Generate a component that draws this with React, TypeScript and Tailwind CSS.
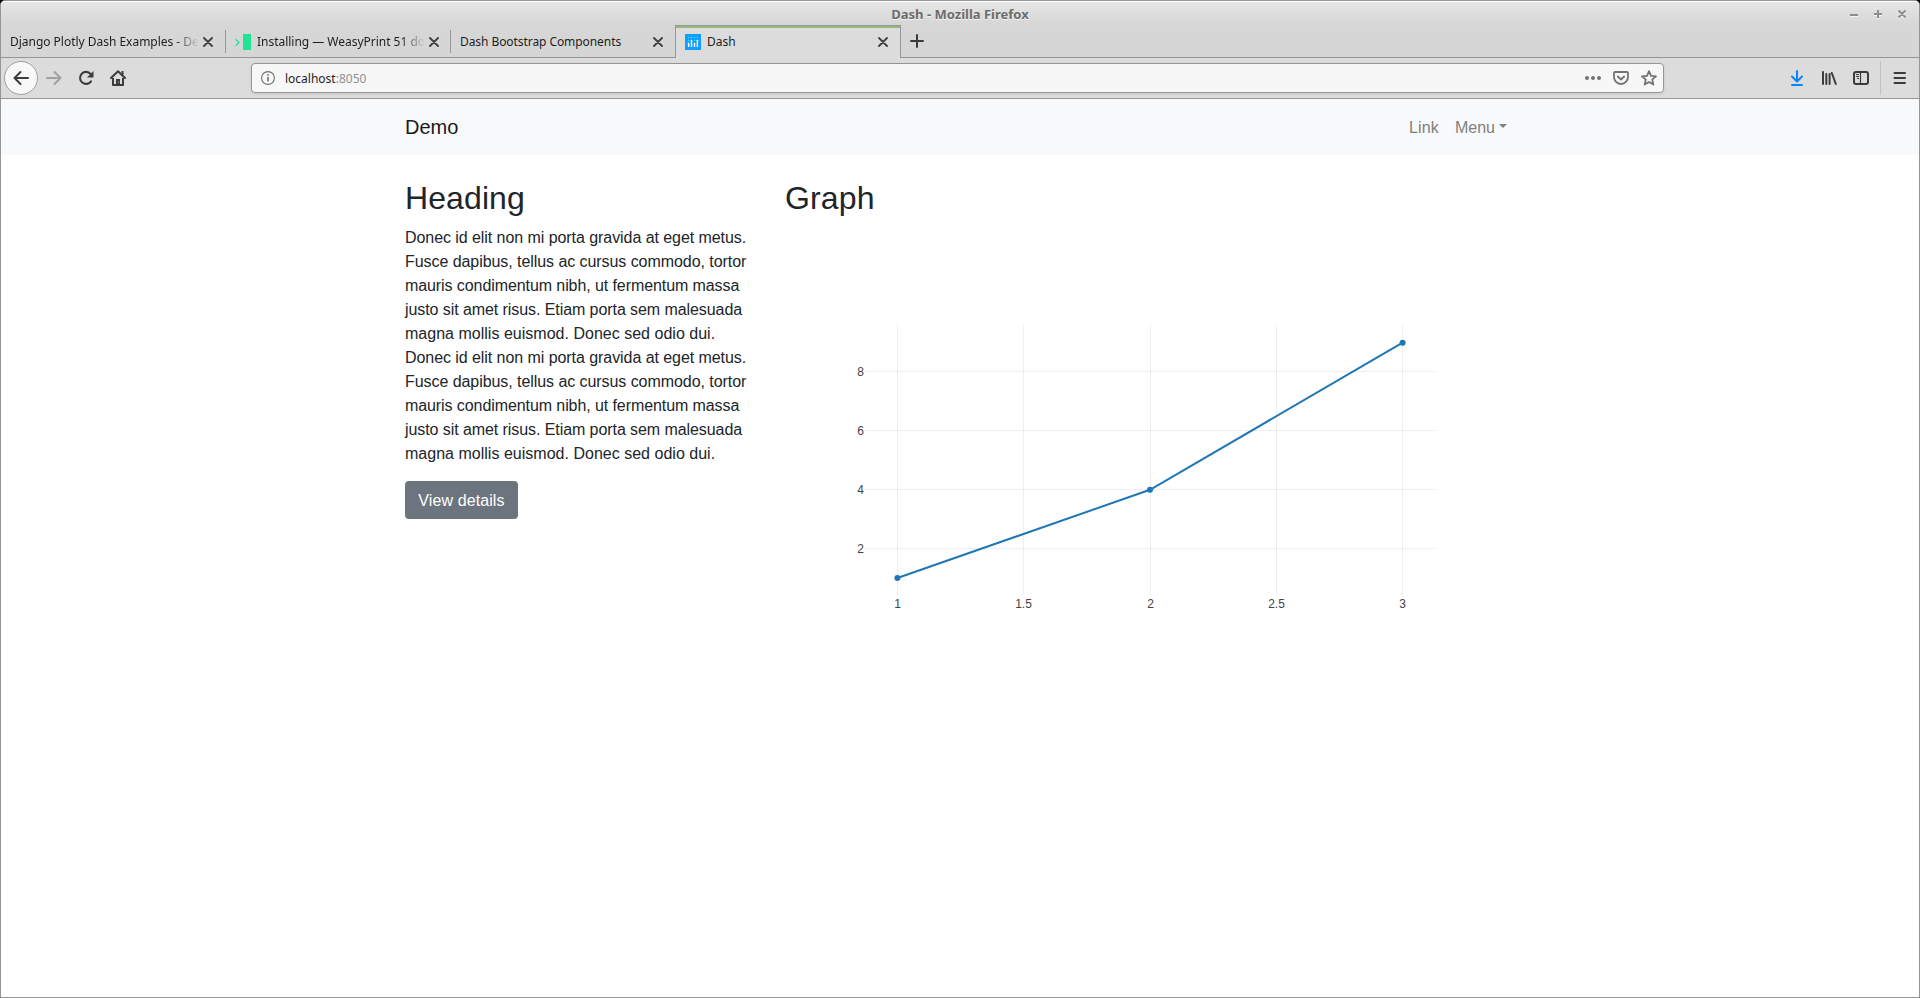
import React from "react";

type TabProps = {
  title: string;
  icon?: React.ReactNode;
  active?: boolean;
  fade?: string;
  separator?: boolean;
};

function CloseIcon() {
  return (
    <svg width="10" height="10" viewBox="0 0 10 10" className="shrink-0" fill="none" stroke="#3f3f3f" strokeWidth="1.8" strokeLinecap="round">
      <path d="M1 1l8 8M9 1l-8 8" />
    </svg>
  );
}

function Tab({ title, icon, active, fade = "", separator }: TabProps) {
  if (active) {
    return (
      <div className="flex h-[33px] w-[226px] shrink-0 flex-col border-x border-t border-[#969696] bg-[#dcdcdc]">
        <div className="h-[2px] shrink-0 bg-[#9ab87c]" />
        <div className="flex flex-1 items-center pr-[12px] pb-[2px] pl-[9px]">
          {icon}
          <span className="ml-[6px] flex-1 leading-[18px] whitespace-nowrap">{title}</span>
          <CloseIcon />
        </div>
      </div>
    );
  }
  return (
    <div className="flex h-[33px] w-[225px] shrink-0 border-b border-[#969696] pt-[5px]">
      <div className={`flex h-[23px] w-full items-center pl-[9px] ${separator ? "border-r border-[#969696] pr-[12px]" : "pr-[13px]"}`}>
        {icon && <span className="mr-[6px] flex">{icon}</span>}
        <span className={`mr-[4px] flex-1 leading-[18px] whitespace-nowrap ${fade}`}>{title}</span>
        <CloseIcon />
      </div>
    </div>
  );
}

function DocsIcon() {
  return (
    <svg width="16" height="16" viewBox="0 0 16 16">
      <path d="M0.8 5.2L4 8.5L0.8 11.8" fill="none" stroke="#1ee494" strokeWidth="1.3" />
      <rect x="8" width="8" height="16" fill="#1ee494" />
    </svg>
  );
}

function DashIcon() {
  return (
    <svg width="16" height="16" viewBox="0 0 16 16" className="shrink-0">
      <rect width="16" height="16" fill="#119dff" />
      <g fill="#25e6f5">
        <circle cx="3.600" cy="3.500" r="0.800" />
        <circle cx="6.500" cy="3.500" r="0.800" />
        <circle cx="9.500" cy="3.500" r="0.800" />
        <circle cx="12.400" cy="3.500" r="0.800" />
        <circle cx="3.600" cy="6.500" r="0.800" />
        <circle cx="9.500" cy="6.500" r="0.800" />
      </g>
      <g fill="#fff">
        <rect x="2.900" y="8.800" width="1.400" height="4.200" rx="0.500" />
        <rect x="5.800" y="5.800" width="1.400" height="7.200" rx="0.500" />
        <rect x="8.800" y="8.800" width="1.400" height="4.200" rx="0.500" />
        <rect x="11.700" y="5.800" width="1.400" height="7.200" rx="0.500" />
      </g>
    </svg>
  );
}

function TitleBar() {
  return (
    <div className="flex h-[24px] shrink-0 items-start border-t border-white bg-linear-to-b from-[#e6e6e6] to-[#d6d6d6]">
      <div className="w-[119px]" />
      <div className="flex-1 pt-[3px] text-center text-[13px] leading-[18px] font-bold text-[#6c6c6c] [text-shadow:0_1px_0_#f4f4f4]">Dash - Mozilla Firefox</div>
      <svg width="119" height="22" viewBox="0 0 119 22" fill="none">
        <g stroke="#fff" strokeWidth="2" transform="translate(0 1)" opacity="0.7">
          <path d="M50 13h8M74 12h8M78 8v8M98.500 8.500l7 7M105.500 8.500l-7 7" />
        </g>
        <g stroke="#8e8e8e" strokeWidth="2">
          <path d="M50 13h8M74 12h8M78 8v8M98.500 8.500l7 7M105.500 8.500l-7 7" />
        </g>
      </svg>
    </div>
  );
}

function Toolbar() {
  return (
    <div className="flex h-[41px] shrink-0 items-center border-b border-[#969696] bg-[#dcdcdc] pl-[3px]">
      <div className="flex h-[34px] w-[34px] items-center justify-center rounded-full border border-[#a0a0a0] bg-[#f8f8f8]">
        <svg width="16" height="16" viewBox="0 0 16 16" fill="none" stroke="#3c3c3c" strokeWidth="2" strokeLinecap="round" strokeLinejoin="round"><path d="M15 8H1.500M7.500 2L1.500 8l6 6" /></svg>
      </div>
      <svg className="ml-[8px]" width="16" height="16" viewBox="0 0 16 16" fill="none" stroke="#a0a0a0" strokeWidth="2" strokeLinecap="round" strokeLinejoin="round"><path d="M1 8h13.500M8.500 2l6 6l-6 6" /></svg>
      <svg className="ml-[16px]" width="16" height="16" viewBox="0 0 16 16" fill="none" stroke="#3c3c3c" strokeWidth="2.1" strokeLinecap="round"><path d="M13 11.300A6 6 0 1 1 12.600 4" /><path d="M15.500 1v6.500h-6.500z" fill="#3c3c3c" stroke="none" /></svg>
      <svg className="ml-[16px]" width="16" height="16" viewBox="0 0 16 16"><path d="M1 8L8 1.200L15 8" fill="none" stroke="#3c3c3c" strokeWidth="2" strokeLinecap="round" strokeLinejoin="round" /><path d="M3 8v7h10V8" fill="none" stroke="#3c3c3c" strokeWidth="2" strokeLinejoin="round" /><path d="M6 15V9h4v6z" fill="#3c3c3c" /><path d="M12.500 1v4" stroke="#3c3c3c" strokeWidth="2" /><circle cx="8.600" cy="12" r="0.600" fill="#dcdcdc" /></svg>
      <div className="ml-[125px] flex h-[30px] w-[1413px] items-center rounded-[4px] border border-[#969696] bg-[#f7f7f7] pl-[9px] shadow-[0_1px_3px_rgba(0,0,0,0.1)]">
        <svg width="14" height="14" viewBox="0 0 14 14" fill="none" stroke="#6e6e6e"><circle cx="7" cy="7" r="6.400" strokeWidth="1.100" /><path d="M7 6v4.500" strokeWidth="1.600" /><circle cx="7" cy="3.900" r="0.900" fill="#6e6e6e" stroke="none" /></svg>
        <span className="ml-[10px] pt-[2px] text-[12px] leading-[18px] text-[#1e1e1e]">localhost<span className="text-[#909090]">:8050</span></span>
        <svg className="ml-auto" width="16" height="16" viewBox="0 0 16 16" fill="#737373"><circle cx="2" cy="8" r="2" /><circle cx="8" cy="8" r="2" /><circle cx="14" cy="8" r="2" /></svg>
        <svg className="ml-[12px]" width="16" height="16" viewBox="0 0 16 16" fill="none" stroke="#737373" strokeWidth="1.800" strokeLinecap="round" strokeLinejoin="round"><path d="M2 2h12a1 1 0 0 1 1 1v4a7 7 0 0 1-14 0V3a1 1 0 0 1 1-1z" /><path d="M4.800 6.500L8 9.500l3.200-3" /></svg>
        <svg className="mr-[6px] ml-[12px]" width="16" height="16" viewBox="0 0 16 16" fill="none" stroke="#737373" strokeWidth="1.800" strokeLinejoin="round"><path d="M8 1.200l2 4.700l5 .4l-3.800 3.300l1.200 5L8 11.900l-4.400 2.700l1.200-5L1 6.300l5-.4z" /></svg>
      </div>
      <div className="ml-auto flex h-[34px] items-center">
        <svg width="14" height="16" viewBox="0 0 14 16" fill="none" stroke="#0a84ff" strokeWidth="2" strokeLinecap="round" strokeLinejoin="round"><path d="M7 1v10M2 6.500l5 5l5-5M2 15h10" /></svg>
        <svg className="ml-[17px]" width="16" height="16" viewBox="0 0 16 16" fill="none" stroke="#3c3c3c" strokeWidth="2" strokeLinecap="round"><path d="M2 2v12M5.300 4v10M8.600 4v10M10.800 3l4 11" /></svg>
        <svg className="ml-[16px]" width="16" height="16" viewBox="0 0 16 16" fill="none" stroke="#3c3c3c"><rect x="1" y="2" width="14" height="12" rx="2" strokeWidth="2" /><path d="M7.500 2v12" strokeWidth="1.200" /><path d="M3 4.500h3M3 6.500h3M4 8.500h2" /></svg>
        <div className="ml-[11px] h-[34px] w-px bg-[#c2c2c2]" />
        <svg className="mr-[12px] ml-[12px]" width="14" height="16" viewBox="0 0 14 16" stroke="#3c3c3c" strokeWidth="2" strokeLinecap="round"><path d="M1.500 3h10.500M1.500 8h10.500M1.500 13h10.500" /></svg>
      </div>
    </div>
  );
}

const points = [
  { x: 112.4, y: 253 },
  { x: 365, y: 164.8 },
  { x: 617.6, y: 17.7 },
];

const xTicks = [
  { x: 112.5, label: "1" },
  { x: 238.5, label: "1.5" },
  { x: 365.5, label: "2" },
  { x: 491.5, label: "2.5" },
  { x: 617.5, label: "3" },
];

const yTicks = [
  { y: 46.5, label: "8" },
  { y: 105.5, label: "6" },
  { y: 164.5, label: "4" },
  { y: 223.5, label: "2" },
];

function Graph() {
  return (
    <svg width="730" height="450" viewBox="0 -100 730 450" className="block font-['Liberation_Sans',Arial,sans-serif] text-[12px]" fill="#444">
      <g stroke="#eee" strokeWidth="1">
        {xTicks.map((t) => <path key={t.label} d={`M${t.x} 0V270`} />)}
        {yTicks.map((t) => <path key={t.label} d={`M80 ${t.y}H650`} />)}
      </g>
      <polyline points={points.map((p) => `${p.x},${p.y}`).join(" ")} fill="none" stroke="#1f77b4" strokeWidth="2" />
      {points.map((p) => <circle key={p.x} cx={p.x} cy={p.y} r="3" fill="#1f77b4" />)}
      {xTicks.map((t) => <text key={t.label} x={t.x} y="283" textAnchor="middle">{t.label}</text>)}
      {yTicks.map((t) => <text key={t.label} x="79" y={t.y + 4} textAnchor="end">{t.label}</text>)}
    </svg>
  );
}

function Paragraph() {
  return (
    <>
      <span className="block tracking-[-0.062px] whitespace-nowrap">Donec id elit non mi porta gravida at eget metus. </span>
      <span className="block tracking-[-0.062px] whitespace-nowrap">Fusce dapibus, tellus ac cursus commodo, tortor </span>
      <span className="block tracking-[-0.085px] whitespace-nowrap">mauris condimentum nibh, ut fermentum massa </span>
      <span className="block tracking-[-0.075px] whitespace-nowrap">justo sit amet risus. Etiam porta sem malesuada </span>
      <span className="block tracking-[0.015px] whitespace-nowrap">magna mollis euismod. Donec sed odio dui. </span>
    </>
  );
}

function Page() {
  return (
    <div className="flex-1 bg-white font-['Liberation_Sans',Arial,sans-serif] text-[16px] leading-[24px] text-[#212529]">
      <nav className="flex h-[56px] justify-center bg-[#f8f9fa]">
        <div className="flex w-[1110px] items-center">
          <a className="text-[20px] leading-[30px] text-[#1a1a1a]">Demo</a>
          <div className="mr-[8px] ml-auto flex gap-[16px] pt-[2px] text-[#808080]">
            <a className="tracking-[0.15px]">Link</a>
            <a className="flex items-center">
              Menu
              <svg className="mb-[4px] ml-[4px]" width="8" height="4" viewBox="0 0 8 4" fill="#808080"><path d="M0 0h8L4 4z" /></svg>
            </a>
          </div>
        </div>
      </nav>
      <main className="mx-auto mt-[24px] flex w-[1110px] gap-[30px]">
        <section className="w-[350px]">
          <h2 className="mb-[9px] text-[32px] leading-[38.4px] font-normal tracking-[0.1px]">Heading</h2>
          <p className="mb-[15px]"><Paragraph /><Paragraph /></p>
          <button className="h-[38px] w-[113px] rounded-[4px] bg-[#6c757d] pt-px tracking-[0.1px] whitespace-nowrap text-white">View details</button>
        </section>
        <section className="w-[730px]">
          <h2 className="mb-[8px] text-[32px] leading-[38.4px] font-normal tracking-[0.15px]">Graph</h2>
          <Graph />
        </section>
      </main>
    </div>
  );
}

export default function App() {
  return (
    <div className="h-[998px] w-[1920px] overflow-hidden bg-black font-['Noto_Sans',sans-serif]">
      <div className="flex h-full flex-col overflow-hidden rounded-t-[5px] border border-[#969696] bg-[#d6d6d6]">
        <TitleBar />
        <div className="flex h-[33px] shrink-0 text-[12px] text-[#1e1e1e]">
          <Tab title="Django Plotly Dash Examples - De" fade="tracking-[-0.02px] [mask-image:linear-gradient(to_left,transparent,black_24px)]" separator />
          <Tab title="Installing — WeasyPrint 51 do" icon={<DocsIcon />} fade="tracking-[-0.02px] [mask-image:linear-gradient(to_left,transparent,black_24px)]" separator />
          <div className="-mr-px flex"><Tab title="Dash Bootstrap Components" fade="tracking-[-0.07px]" /></div>
          <Tab title="Dash" icon={<DashIcon />} active />
          <div className="flex flex-1 border-b border-[#969696] pt-[9px] pl-[9px]">
            <svg width="14" height="14" viewBox="0 0 14 14" stroke="#3c3c3c" strokeWidth="2" strokeLinecap="round"><path d="M7 1v12M1 7h12" /></svg>
          </div>
        </div>
        <Toolbar />
        <Page />
      </div>
    </div>
  );
}
